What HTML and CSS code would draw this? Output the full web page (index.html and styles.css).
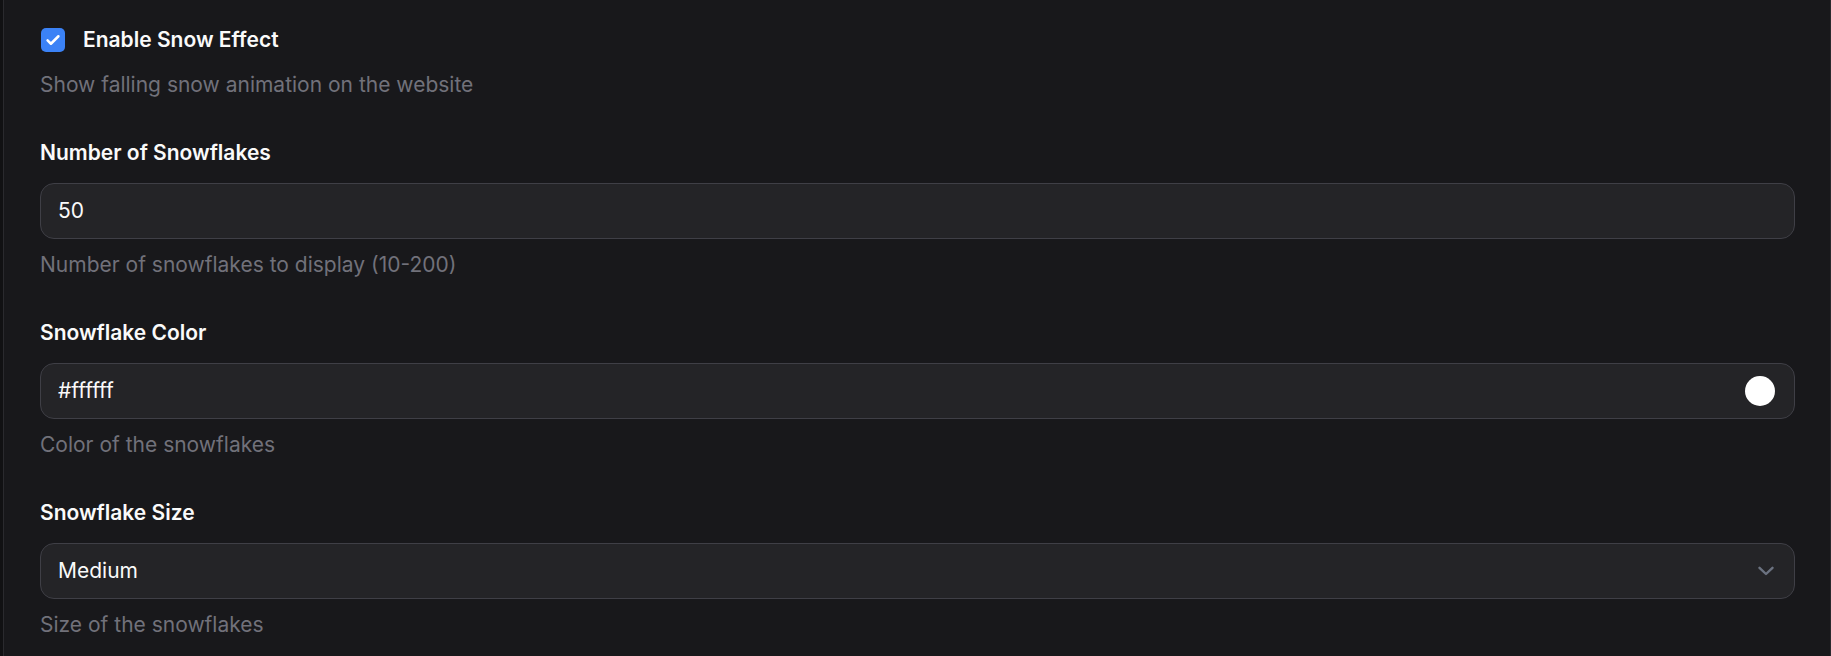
FILE: index.html
```html
<!DOCTYPE html>
<html lang="en">
<head>
<meta charset="utf-8">
<title>Snow Effect Settings</title>
<link rel="stylesheet" href="styles.css">
</head>
<body>
<div class="panel">
  <div class="field">
    <label class="check-row">
      <span class="checkbox">
        <svg viewBox="0 0 24 24" width="20" height="20"><path d="M5.5 12.5l4 4L18.5 7.5" fill="none" stroke="#fff" stroke-width="3" stroke-linecap="round" stroke-linejoin="round"/></svg>
      </span>
      <span class="check-label">Enable Snow Effect</span>
    </label>
    <p class="desc desc-first">Show falling snow animation on the website</p>
  </div>

  <div class="field">
    <div class="label">Number of Snowflakes</div>
    <div class="input"><span class="value">50</span></div>
    <p class="desc">Number of snowflakes to display (10-200)</p>
  </div>

  <div class="field">
    <div class="label">Snowflake Color</div>
    <div class="input"><span class="value">#ffffff</span><span class="swatch"></span></div>
    <p class="desc">Color of the snowflakes</p>
  </div>

  <div class="field">
    <div class="label">Snowflake Size</div>
    <div class="input"><span class="value">Medium</span>
      <svg class="chevron" viewBox="0 0 16 10" width="16" height="10"><path d="M1.5 1.8L8 8l6.5-6.2" fill="none" stroke="#6b7280" stroke-width="2.4" stroke-linecap="round" stroke-linejoin="round"/></svg>
    </div>
    <p class="desc">Size of the snowflakes</p>
  </div>
</div>
</body>
</html>
```

FILE: styles.css
```css
* { box-sizing: border-box; }

html, body {
  margin: 0;
  padding: 0;
  height: 100%;
  background: #111113;
}

body {
  font-family: Inter, "Noto Sans", sans-serif;
  color: #fafafa;
  overflow: hidden;
}

.panel {
  margin-left: 3px;
  min-height: 100%;
  background: #18181b;
  border-left: 1px solid #2a2a2e;
  border-right: 1px solid #2a2a2e;
  padding: 25px 35px 0 36px;
  display: flex;
  flex-direction: column;
  gap: 38px;
}

.field {
  display: flex;
  flex-direction: column;
}

.check-row {
  display: flex;
  align-items: center;
  height: 30px;
  gap: 18px;
}

.checkbox {
  width: 24px;
  height: 24px;
  margin-left: 1px;
  border-radius: 5px;
  background: #3b82f6;
  display: flex;
  align-items: center;
  justify-content: center;
}

.check-label,
.label {
  font-size: 21px;
  font-weight: 600;
  line-height: 30px;
  color: #fafafa;
}

.label {
  margin-bottom: 15px;
}

.desc {
  margin: 11px 0 0 0;
  font-size: 21px;
  line-height: 30px;
  color: #71717a;
}

.desc-first {
  margin-top: 15px;
}

.input {
  height: 56px;
  border: 1px solid #3f3f46;
  border-radius: 14px;
  background: #242427;
  display: flex;
  align-items: center;
  justify-content: space-between;
  padding: 0 19px 0 17px;
}

.value {
  font-size: 21px;
  line-height: 30px;
  color: #fafafa;
}

.swatch {
  width: 30px;
  height: 30px;
  border-radius: 50%;
  background: #ffffff;
}

.chevron {
  margin-right: 1px;
}
```
